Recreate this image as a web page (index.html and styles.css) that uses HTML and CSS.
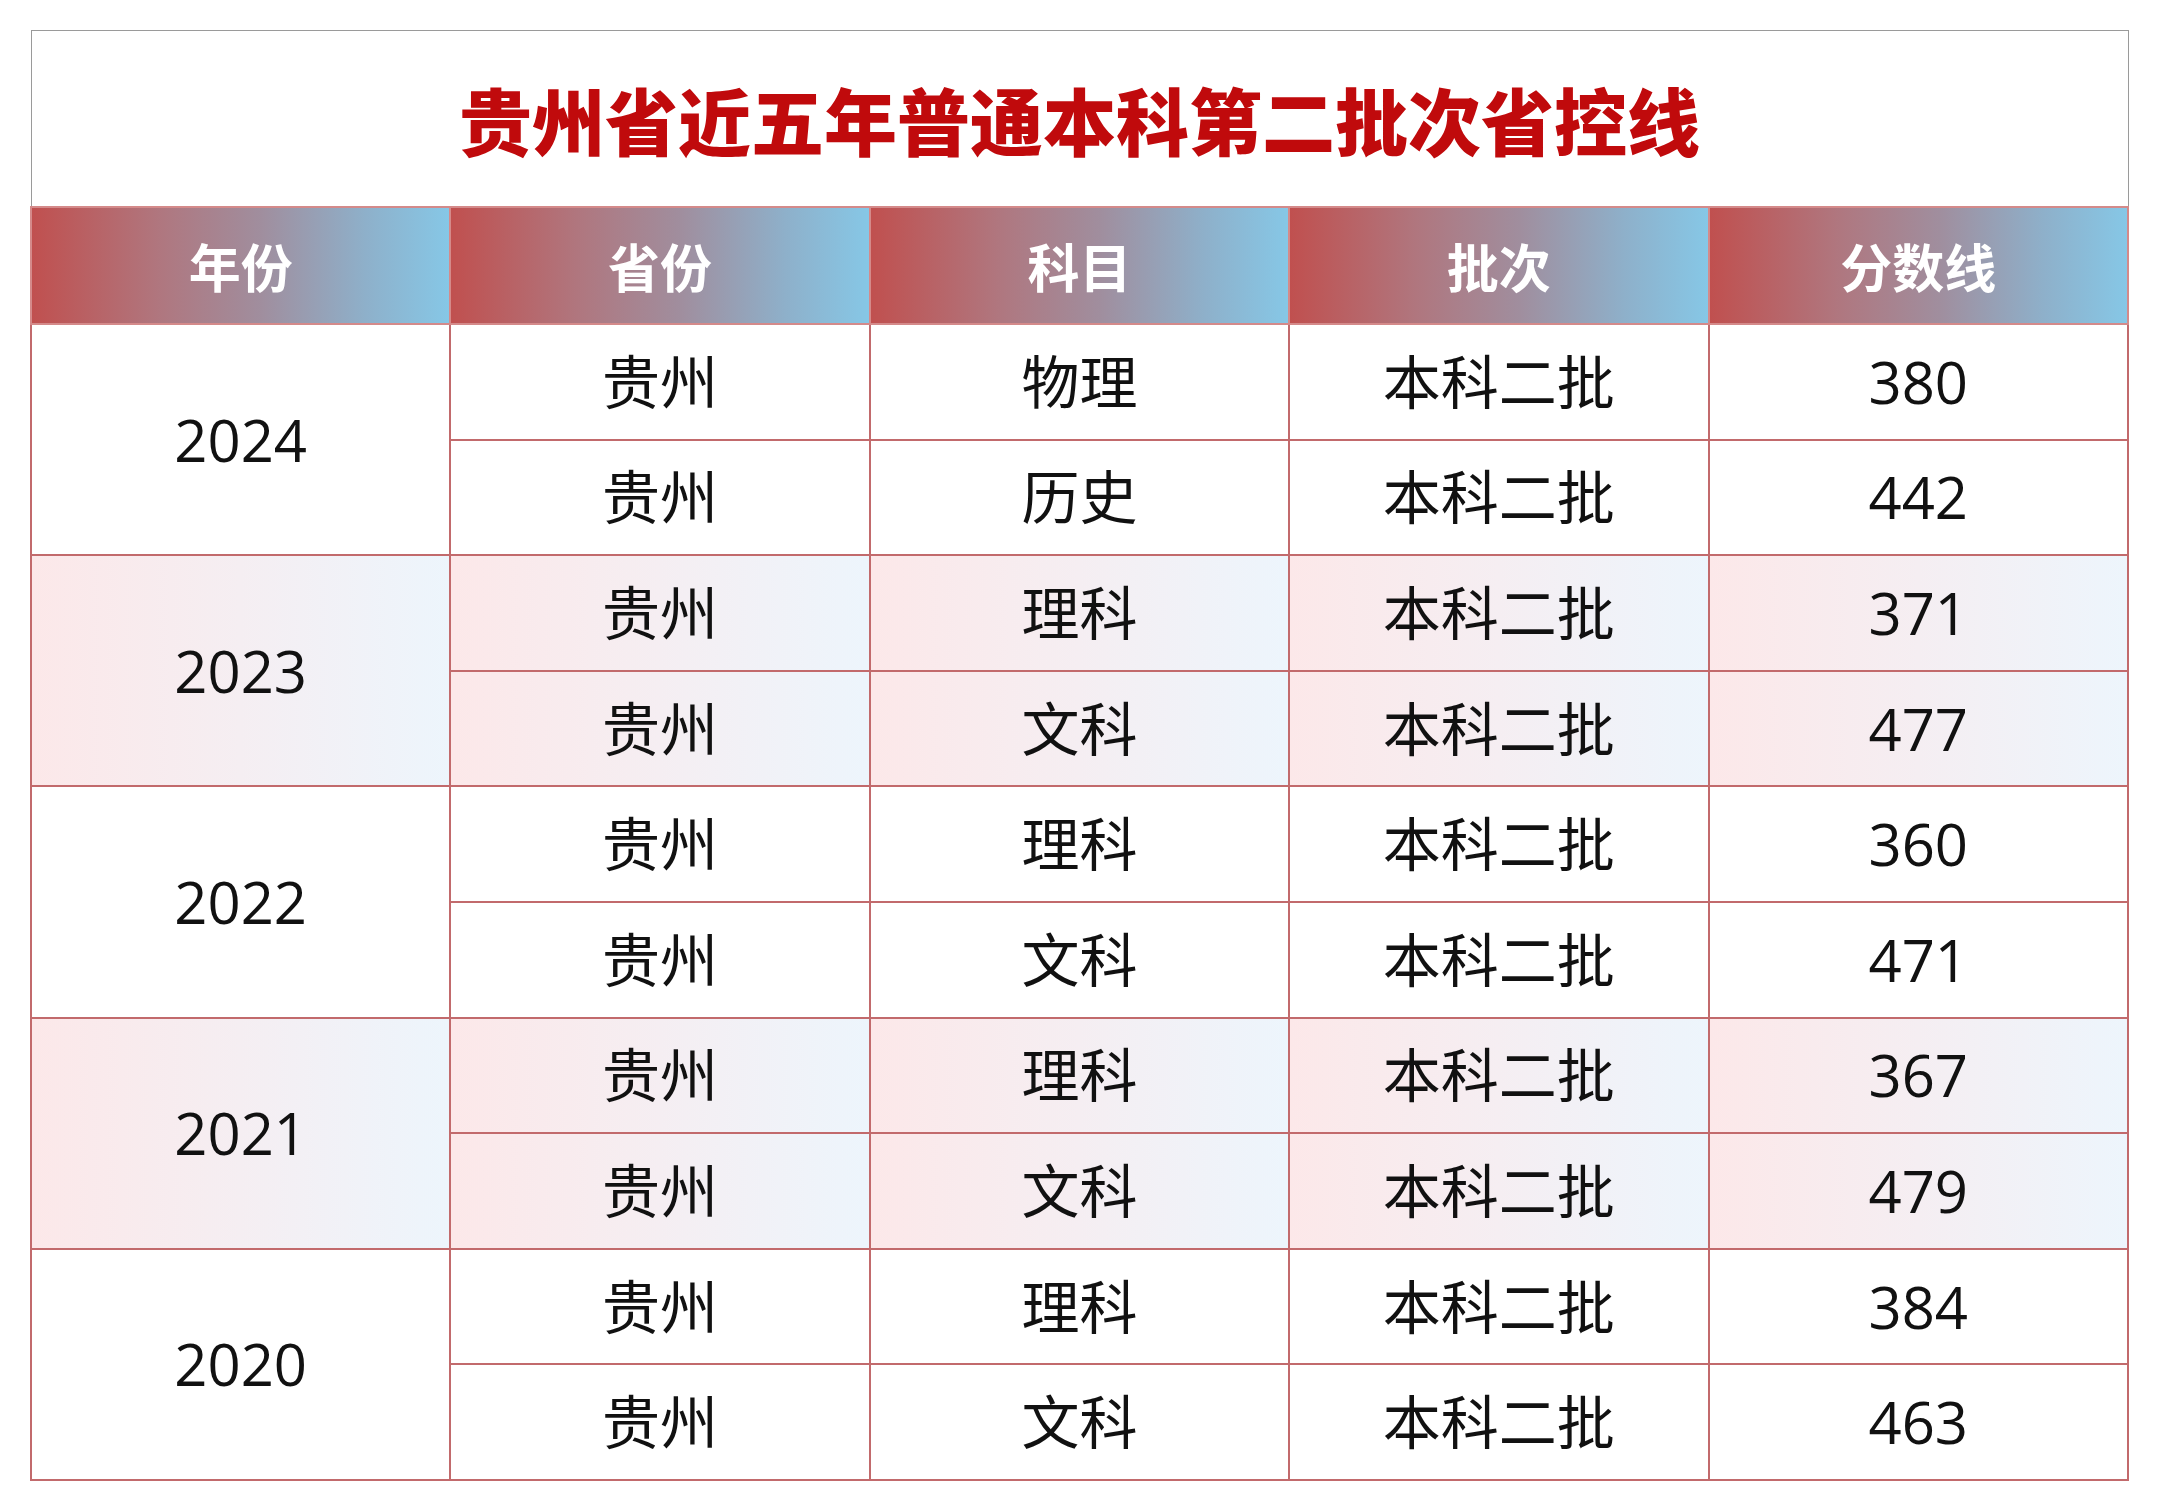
FILE: index.html
```html
<!DOCTYPE html>
<html lang="zh-CN">
<head>
<meta charset="utf-8">
<title>贵州省近五年普通本科第二批次省控线</title>
<link rel="stylesheet" href="styles.css">
</head>
<body>
<div class="page">
<table class="score-table">
  <colgroup>
    <col class="col"><col class="col"><col class="col"><col class="col"><col class="col">
  </colgroup>
  <thead>
    <tr class="title-row"><th colspan="5" class="title">贵州省近五年普通本科第二批次省控线</th></tr>
    <tr class="head-row">
      <th class="head">年份</th>
      <th class="head">省份</th>
      <th class="head">科目</th>
      <th class="head">批次</th>
      <th class="head">分数线</th>
    </tr>
  </thead>
  <tbody>
    <tr><td rowspan="2" class="year">2024</td><td>贵州</td><td>物理</td><td>本科二批</td><td>380</td></tr>
    <tr><td>贵州</td><td>历史</td><td>本科二批</td><td>442</td></tr>
    <tr class="alt"><td rowspan="2" class="year">2023</td><td>贵州</td><td>理科</td><td>本科二批</td><td>371</td></tr>
    <tr class="alt"><td>贵州</td><td>文科</td><td>本科二批</td><td>477</td></tr>
    <tr><td rowspan="2" class="year">2022</td><td>贵州</td><td>理科</td><td>本科二批</td><td>360</td></tr>
    <tr><td>贵州</td><td>文科</td><td>本科二批</td><td>471</td></tr>
    <tr class="alt"><td rowspan="2" class="year">2021</td><td>贵州</td><td>理科</td><td>本科二批</td><td>367</td></tr>
    <tr class="alt"><td>贵州</td><td>文科</td><td>本科二批</td><td>479</td></tr>
    <tr><td rowspan="2" class="year">2020</td><td>贵州</td><td>理科</td><td>本科二批</td><td>384</td></tr>
    <tr><td>贵州</td><td>文科</td><td>本科二批</td><td>463</td></tr>
  </tbody>
</table>
</div>
</body>
</html>
```
FILE: styles.css
```css
html, body {
  margin: 0;
  padding: 0;
  background: #ffffff;
}

.page {
  padding: 30px 0 0 30px;
}

.score-table {
  width: 2099px;
  table-layout: fixed;
  border-collapse: collapse;
  font-family: "Open Sans", "Noto Sans CJK SC", sans-serif;
  color: #111111;
}

.col {
  width: 20%;
}

.title-row th {
  height: 175px;
  padding: 0;
  border-top: 1px solid #9a9a9a;
  border-left: 1px solid #9a9a9a;
  border-right: 1px solid #9a9a9a;
  background: #ffffff;
}

.title {
  font-family: "Noto Sans CJK SC", sans-serif;
  font-weight: 800;
  font-size: 73px;
  color: #c00a0c;
  text-align: center;
  vertical-align: middle;
  line-height: 1;
  padding-top: 2px;
}

.head-row th {
  height: 115px;
  padding: 0;
  border: 2px solid #d48a8a;
  background: linear-gradient(90deg, #c0504f 0%, #b0767e 30%, #a08e9e 55%, #8eb0ca 80%, #86c7e6 100%);
  color: #ffffff;
  font-family: "Noto Sans CJK SC", sans-serif;
  font-weight: 700;
  font-size: 52px;
  text-align: center;
  vertical-align: middle;
  line-height: 1;
}

tbody td {
  height: 113.6px;
  padding: 0;
  border: 2px solid #c26a6c;
  text-align: center;
  vertical-align: middle;
  font-size: 58px;
  line-height: 1;
  background: #ffffff;
}

tbody tr.alt td {
  background: linear-gradient(90deg, #fce8e9 0%, #f5eef2 50%, #edf5fc 100%);
}

.year {
  font-size: 58px;
}
```
